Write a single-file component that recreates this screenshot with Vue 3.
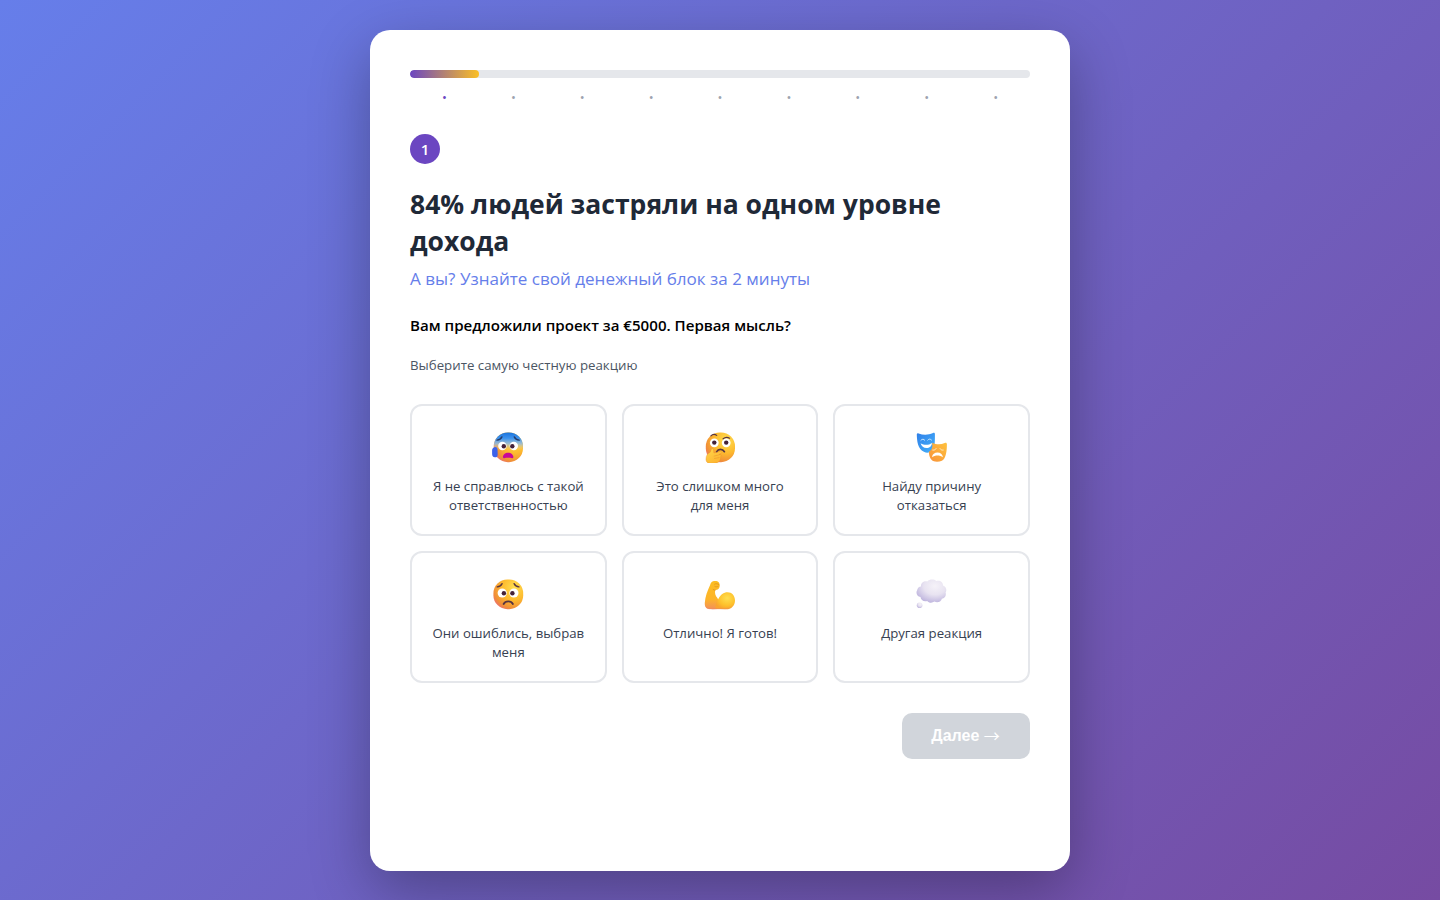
<script setup>
const dots = Array.from({ length: 9 }, (_, i) => i)
const options = [
  { icon: 'anxious', text: 'Я не справлюсь с такой ответственностью' },
  { icon: 'thinking', text: 'Это слишком много для меня' },
  { icon: 'masks', text: 'Найду причину отказаться' },
  { icon: 'worried', text: 'Они ошиблись, выбрав меня' },
  { icon: 'muscle', text: 'Отлично! Я готов!' },
  { icon: 'thought', text: 'Другая реакция' }
]
</script>

<template>
  <main class="page">
    <svg class="defs" width="0" height="0" aria-hidden="true">
      <defs>
        <radialGradient id="face" cx=".7" cy=".28" r=".85">
          <stop offset="0" stop-color="#ffdf50" /><stop offset=".5" stop-color="#fdb92e" /><stop offset=".82" stop-color="#f08f38" /><stop offset="1" stop-color="#ec6a78" />
        </radialGradient>
        <linearGradient id="chill" x1="0" y1="0" x2="0" y2="1">
          <stop offset="0" stop-color="#1a72dc" /><stop offset=".2" stop-color="#3c93ee" /><stop offset=".38" stop-color="#8fbbe6" stop-opacity=".85" /><stop offset=".6" stop-color="#ffd58a" stop-opacity="0" />
        </linearGradient>
        <linearGradient id="hand" x1="0" y1="0" x2=".6" y2="1">
          <stop offset="0" stop-color="#ffd84a" /><stop offset="1" stop-color="#fdb531" />
        </linearGradient>
        <linearGradient id="blueMask" x1="0" y1="0" x2="1" y2="1">
          <stop offset="0" stop-color="#2f7fe8" /><stop offset="1" stop-color="#45b2fb" />
        </linearGradient>
        <linearGradient id="orangeMask" x1="1" y1="0" x2="0" y2="1">
          <stop offset="0" stop-color="#ffc23d" /><stop offset="1" stop-color="#f8923a" />
        </linearGradient>
        <linearGradient id="arm" x1="0" y1="0" x2="0" y2="1">
          <stop offset="0" stop-color="#fcbd22" /><stop offset=".65" stop-color="#fdb42a" /><stop offset="1" stop-color="#f2905a" />
        </linearGradient>
        <radialGradient id="biceps" cx=".6" cy=".35" r=".65">
          <stop offset="0" stop-color="#ffdf50" /><stop offset=".65" stop-color="#fec12c" /><stop offset="1" stop-color="#f9a42f" />
        </radialGradient>
        <radialGradient id="cloud" cx=".62" cy=".28" r=".75">
          <stop offset="0" stop-color="#f5f2f8" /><stop offset=".5" stop-color="#e8e3f1" /><stop offset="1" stop-color="#bdb3dd" />
        </radialGradient>
      </defs>
    </svg>
    <section class="quiz">
      <div class="track"><div class="fill"></div></div>
      <div class="steps"><span v-for="d in dots" :key="d" :class="{ active: d === 0 }">•</span></div>
      <div class="badge">1</div>
      <h1>84% людей застряли на одном уровне дохода</h1>
      <p class="subtitle">А вы? Узнайте свой денежный блок за 2 минуты</p>
      <p class="question">Вам предложили проект за €5000. Первая мысль?</p>
      <p class="hint">Выберите самую честную реакцию</p>
      <div class="grid">
        <div v-for="o in options" :key="o.icon" class="option">
          <svg class="icon" :viewBox="o.icon === 'anxious' || o.icon === 'worried' ? '0 0 32 32' : '0.4 0 32 32'" width="32" height="32">
            <template v-if="o.icon === 'anxious'">
              <rect x="1.8" y="1.4" width="29.2" height="29.8" rx="14" fill="url(#face)" />
              <rect x="1.8" y="1.4" width="29.2" height="29.8" rx="14" fill="url(#chill)" />
              <circle cx="10.4" cy="15" r="4.2" fill="#fff" /><circle cx="21.8" cy="15" r="4.2" fill="#fff" />
              <circle cx="11.8" cy="15.2" r="2.2" fill="#442138" /><circle cx="20.3" cy="15.2" r="2.2" fill="#442138" />
              <path d="M5 9.1c2.4-.3 4-1.3 4.9-3.2M27.2 9.1c-2.4-.3-4-1.3-4.9-3.2" fill="none" stroke="#263c69" stroke-width="1.4" stroke-linecap="round" />
              <path d="M10.9 26.1c0-2.5 2.2-4.4 5.2-4.4s5.3 1.9 5.3 4.4c0 .9-.5 1.3-1.3 1.1-2.4-.6-5.5-.6-8 0-.8.1-1.2-.3-1.2-1.1Z" fill="#c80797" />
              <path d="M1.4 16.8c1.6-1.4 3.9-.5 4.1 1.5l.2 5.1c0 2-1.2 3.1-2.9 2.9C.9 26.1.1 24.9.1 22.7v-3.2c0-1.1.4-2 1.3-2.7Z" fill="#3c62ea" />
            </template>
            <template v-else-if="o.icon === 'thinking'">
              <rect x="2.2" y="1.4" width="29.2" height="29.8" rx="14" fill="url(#face)" />
              <circle cx="10.7" cy="11.8" r="4.4" fill="#fff" /><circle cx="22.6" cy="11.8" r="4.4" fill="#fff" />
              <circle cx="10.7" cy="11.6" r="2.2" fill="#442138" /><circle cx="22.6" cy="11.6" r="2.2" fill="#442138" />
              <path d="M7.3 4.8c1.8-1.8 3.9-1.9 5.8-.4M19.5 7.8c2-1.7 4.4-1.8 6.5-.6" fill="none" stroke="#573442" stroke-width="1.2" stroke-linecap="round" />
              <path d="M13 20.8c1.7-3.3 6-3.2 7.8-.1" fill="none" stroke="#573442" stroke-width="1.7" stroke-linecap="round" />
              <path d="M7.7 18.4c.2-1.1 1.9-1.1 2.2 0l.4 3.6c2.2-.4 4.3-1 6.2-1.6 1.7-.4 2.4 1.3.9 2.1l-2 .9c2.2.2 2.7 1.1 1.8 2-.1 4.5-2.2 6.9-6.9 6.9H6.4c-2.5 0-4-1.6-4-4.1 0-3.8 1.7-6 4.2-7Z" fill="url(#hand)" stroke="#e88c2c" stroke-width=".4" />
              <path d="m10.5 25.1 4.8-1.2m-4.4 3.6 4.6-.9" fill="none" stroke="#ee9c2d" stroke-width=".7" stroke-linecap="round" />
            </template>
            <template v-else-if="o.icon === 'masks'">
              <path d="M1.2 3.2c.2-1 1-1.2 1.8-.7 4.8 1.7 9.5 1.7 14.4-.5 1-.5 1.9-.1 1.9.9 0 6.1.4 14.5-3.4 17.4-2.3 1.7-5.2 1.7-7.6.5C2.1 18 1.3 9.7 1.2 3.2Z" fill="url(#blueMask)" />
              <path d="M5.3 9.3c1.2-1.5 2.8-1.4 3.8-.1m3.1-.1c1.1-1.4 2.6-1.3 3.7-.1" fill="none" stroke="#d9efff" stroke-width=".9" stroke-linecap="round" />
              <path d="M5 12.2c3.7 2.2 8 2.1 11.4-.3-.2 3-2.5 5.1-5.4 5.2-2.8.1-5.2-1.9-6-4.9Z" fill="#fff" />
              <path d="M16.5 11.7c4.5 2 8.6 2.1 12.6.3 1.3-.6 2.2-.1 2.2 1.3 0 6.3-.8 14.5-5 16.4-2.8 1.4-6.2 1.5-8.8.3-3.1-1.7-4.2-5.5-4.2-9.2 3.1-2 3.9-4.6 3.2-9.1Z" fill="url(#orangeMask)" />
              <path d="M17.2 19.1c1.4.2 2.6-.3 3.3-1.5m4 .1c.7 1.1 1.8 1.6 3.1 1.4" fill="none" stroke="#fff3d3" stroke-width=".9" stroke-linecap="round" />
              <path d="M16.4 26.2c.4-3.2 2.6-4.7 5.5-4.7s5 1.6 5.5 4.7c-3.3-2.3-7.8-2.3-11 0Z" fill="#fff" />
            </template>
            <template v-else-if="o.icon === 'worried'">
              <rect x="1.4" y="1.4" width="29.8" height="29.8" rx="14" fill="url(#face)" />
              <circle cx="10.2" cy="15" r="4.6" fill="#fff" /><circle cx="21.9" cy="15" r="4.6" fill="#fff" />
              <circle cx="11.9" cy="15.2" r="2.2" fill="#442138" /><circle cx="20.4" cy="15.2" r="2.2" fill="#442138" />
              <path d="M5.2 8.8c2.4-.3 4-1.3 4.9-3.2M27 8.8c-2.4-.3-4-1.3-4.9-3.2" fill="none" stroke="#573442" stroke-width="1.3" stroke-linecap="round" />
              <path d="M11.6 26c1.8-3.5 7.5-3.5 9.3 0" fill="none" stroke="#573442" stroke-width="1.8" stroke-linecap="round" />
            </template>
            <template v-else-if="o.icon === 'muscle'">
              <path d="M6.5 6.9C7.2 4 9 2.8 11.2 3c3.3-.2 5.2 1.7 4.9 5-.2 2.7-1.9 4.2-4.5 4.1-.6 3.1.1 5.9 2.2 7.9l5 10.3c-4.4.8-9.4 1-13.3.7-3.5-.3-4.5-2.8-4.3-6.2C1.5 18.4 4.1 12.2 6.5 6.9Z" fill="url(#arm)" />
              <path d="M11.8 30.8c-.4-4.1 1.2-7.1 2.9-9.8 2.1-4.4 5.4-6.8 9.2-6.8 4.4 0 7.5 3.4 7.5 8.3 0 5.2-3.5 8.8-8.9 8.8Z" fill="url(#biceps)" />
              <path d="M11.1 6.1c1.4-.8 3.1-.4 4.2.5M11.3 8.5c1 .5 2.5.5 3.3-.1m-2.9 3.7c-.8 0-1.6-.1-2.1-.5" fill="none" stroke="#dd9120" stroke-width=".8" stroke-linecap="round" />
              <path d="M2 27.7c1.7 3.1 5.3 2.2 10 2.4 5.1.2 11.5 1.3 16-1.5-2 2-4.4 2.8-7.3 2.7H6.1c-2.4 0-3.8-1.2-4.1-3.6Z" fill="#ed8862" opacity=".5" />
            </template>
            <template v-else>
              <path d="M5.4 8.5C5 4.9 8.5 2.6 11.7 3.5 14 1 18.5 1 20.6 3c3.7-1.2 7 1 6.8 4.6 3 .9 4.2 4.4 2.6 6.9 1 3.4-1.1 5.8-3.7 6.3-1 3.4-4.9 4.3-7.4 2.8-2.5 1.8-5.7 1.4-7.3-.6-3.5.9-6.4-.9-6.7-4C1.3 18.5-.1 14.9 1.6 12c.3-2 1.8-3.3 3.8-3.5Z" fill="url(#cloud)" />
              <circle cx="4" cy="27.3" r="2.8" fill="url(#cloud)" />
            </template>
          </svg>
          <div class="label">{{ o.text }}</div>
        </div>
      </div>
      <div class="actions"><button class="next" disabled>Далее <span class="arrow">→</span></button></div>
    </section>
  </main>
</template>

<style>
body { margin: 0; }
</style>

<style scoped>
* { box-sizing: border-box; }
.page {
  height: 900px;
  padding-top: 30px;
  overflow: hidden;
  background: linear-gradient(135deg, #667eea 0%, #764ba2 100%);
  font-family: "Open Sans", "Noto Sans", sans-serif;
}
.defs { position: absolute; }
.quiz {
  width: 700px;
  height: 841px;
  margin: 0 auto;
  padding: 40px;
  border-radius: 20px;
  background: #fff;
  box-shadow: 0 20px 60px rgba(0, 0, 0, .3);
}
.track { height: 8px; border-radius: 4px; background: #e5e7eb; overflow: hidden; }
.fill { width: 11.11%; height: 100%; border-radius: 4px; background: linear-gradient(90deg, #6b46c1, #fbbf24); }
.steps { display: flex; height: 16px; margin: 11px 0 29px; font-size: 13px; line-height: 16px; color: #9ca3af; }
.steps span { flex: 1; text-align: center; }
.steps .active { color: #6b46c1; }
.badge {
  display: flex; align-items: center; justify-content: center;
  width: 30px; height: 30px; padding-bottom: 1px; border-radius: 50%;
  background: #6b46c1; color: #fff; font-size: 15px; font-weight: 600;
}
h1 { margin: 22px 0 0; font-size: 26.5px; line-height: 37px; font-weight: 700; color: #1f2937; }
.subtitle { margin: 7px 0 0; font-size: 17.06px; line-height: 24px; color: #667eea; }
.question { margin: 24px 0 0; font-size: 15.1px; line-height: 21px; font-weight: 600; color: #000; }
.hint { margin: 20px 0 0; font-size: 13.27px; line-height: 19px; color: #4b5563; }
.grid { display: grid; grid-template-columns: repeat(3, 1fr); grid-auto-rows: 132px; gap: 15px; margin-top: 29px; }
.option {
  display: flex; flex-direction: column; align-items: center;
  padding: 25px 20px 0; border: 2px solid #e5e7eb; border-radius: 12px; text-align: center;
}
.icon { display: block; flex: none; }
.label { margin-top: 14px; font-size: 13.2px; line-height: 19px; color: #374151; }
.actions { display: flex; justify-content: flex-end; margin-top: 30px; }
.next {
  width: 128px; height: 46px; padding: 0 1px 2px 0; border: 0; border-radius: 10px;
  background: #d1d5db; color: #fff;
  font-family: "Liberation Sans", Arial, sans-serif; font-size: 16px; font-weight: 700;
}
.arrow { position: relative; top: 1px; font-family: "Noto Sans CJK JP", sans-serif; font-weight: 400; line-height: 1; }
</style>
